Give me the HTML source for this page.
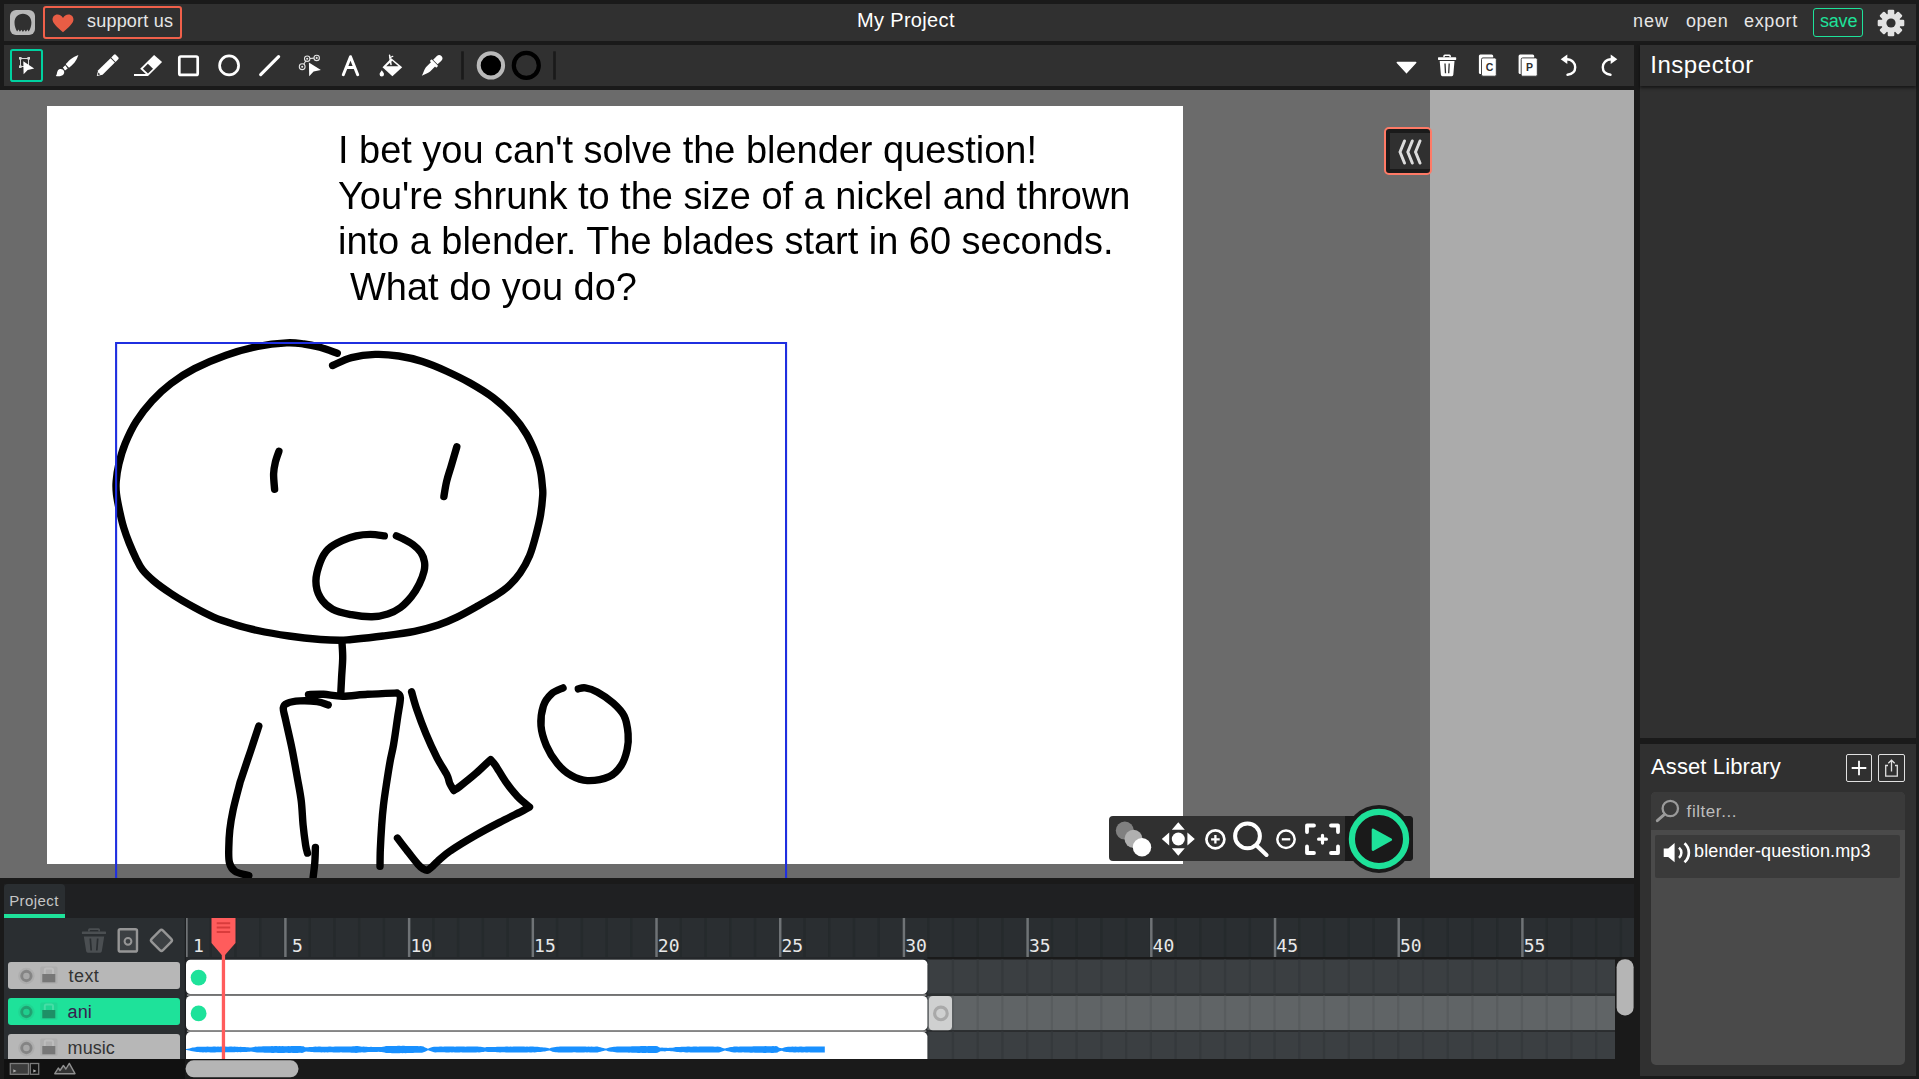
<!DOCTYPE html>
<html lang="en">
<head>
<meta charset="utf-8">
<title>Wick Editor</title>
<style>
*{box-sizing:border-box;margin:0;padding:0}
html,body{width:1919px;height:1079px;overflow:hidden;background:#1a1a1a}
body{position:relative;font-family:"Liberation Sans",sans-serif;color:#fff}
.abs{position:absolute}
.t{position:absolute;white-space:nowrap;line-height:1}
#menubar{left:4px;top:4px;width:1912px;height:37px;background:#303030}
#toolbar{left:4px;top:45px;width:1630px;height:41px;background:#303030}
#canvasarea{left:0;top:90px;width:1634px;height:788px;background:#6b6b6b;overflow:hidden}
#lightgray{left:1430px;top:0;width:204px;height:788px;background:#ababab}
#stage{left:47px;top:15.5px;width:1136px;height:758.5px;background:#fff}
#inspector{left:1640px;top:45px;width:276px;height:693px;background:#303030}
#inspectorhead{left:0;top:0;width:276px;height:41px;background:#303030;box-shadow:0 2px 3px rgba(0,0,0,.55)}
#assets{left:1640px;top:744px;width:276px;height:332px;background:#303030}
#timeline{left:4px;top:884px;width:1630px;height:195px;background:#1a1a1a}
#ctext{left:338.4px;top:38px;will-change:transform;font-size:37.95px;line-height:45.7px;color:#000;white-space:nowrap}
.lyr{left:4.300px;width:171.300px;height:27px;border-radius:3px}
.num{top:53px;font-size:18px;color:#e8e8e8;font-family:'DejaVu Sans Mono',monospace}
</style>
</head>
<body>
<div id="menubar" class="abs">
  <div class="abs" style="left:6px;top:6px;width:25px;height:25px;border-radius:6px;background:#b9b9b9"></div>
  <svg class="abs" style="left:6px;top:6px" width="25" height="25" viewBox="10 10 25 25"><path d="M22.9 13.8c5 0 8.5 3.9 8.5 8.8 0 3.5-1 6.4-2.7 8.9l-1.3-1.9-1.5 2.2-1.5-2-1.5 2.2-1.5-2.2-1.5 2-1.4-2.2-1.4 1.8c-1.6-2.4-2.6-5.3-2.6-8.8 0-4.9 3.4-8.8 8.4-8.8z" fill="#303030"/></svg>
  <div class="abs" style="left:39px;top:2px;width:139px;height:33px;border:2px solid #f0604a;border-radius:3px"></div>
  <svg class="abs" style="left:47.5px;top:9.6px" width="22" height="19" viewBox="0 0 22 19"><path d="M11 18.2C8.5 16 1.2 10.6 0.6 6.3 0.1 2.6 2.6 0.4 5.5 0.4c2.4 0 4.300 1.300 5.500 3.600C12.200 1.700 14.100 0.400 16.500 0.400c2.900 0 5.400 2.200 4.900 5.900C20.800 10.600 13.500 16 11 18.200z" fill="#e85d45"/></svg>
  <div class="t" id="t_support" style="left:83.0px;top:7.9px;font-size:18px;color:#e6e6e6;letter-spacing:0.21px">support us</div>
  <div class="t" id="t_title" style="left:853.0px;top:6.0px;font-size:20px;color:#fff;letter-spacing:0.33px">My Project</div>
  <div class="t" id="t_new" style="left:1629.0px;top:7.9px;font-size:18px;color:#e6e6e6;letter-spacing:1.00px">new</div>
  <div class="t" id="t_open" style="left:1682.0px;top:7.9px;font-size:18px;color:#e6e6e6;letter-spacing:0.54px">open</div>
  <div class="t" id="t_export" style="left:1740.0px;top:7.9px;font-size:18px;color:#e6e6e6;letter-spacing:0.64px">export</div>
  <div class="abs" style="left:1809px;top:4px;width:50px;height:29px;border:1px solid #1ee29a;border-radius:3px"></div>
  <div class="t" id="t_save" style="left:1816.0px;top:7.9px;font-size:18px;color:#1ee29a;letter-spacing:-0.21px">save</div>
  <svg class="abs" style="left:1873px;top:5px" width="28" height="28" viewBox="-14 -14 28 28"><g fill="#e2e2e2"><circle r="9.6"/><g id="teeth"><rect x="-3.3" y="-13.3" width="6.600" height="6" rx="1.2"/><rect x="-3.3" y="7.300" width="6.600" height="6" rx="1.2"/></g><use href="#teeth" transform="rotate(45)"/><use href="#teeth" transform="rotate(90)"/><use href="#teeth" transform="rotate(135)"/></g><circle r="4.6" fill="#303030"/></svg>
</div>
<div id="toolbar" class="abs">
<svg class="abs" style="left:0;top:0" width="1630" height="41" viewBox="4 45 1630 41">
  <rect x="11" y="50" width="31" height="31" rx="1.800" fill="none" stroke="#00d1a0" stroke-width="2"/>
  <!-- cursor -->
  <g fill="none" stroke="#d8d8d8" stroke-width="1"><rect x="20.5" y="58.5" width="8" height="8"/></g>
  <g fill="#d8d8d8"><rect x="19" y="57" width="2.600" height="2.600"/><rect x="27.400" y="57" width="2.600" height="2.600"/><rect x="19" y="65.400" width="2.600" height="2.600"/></g>
  <path d="M23.300 61.200L34.200 68.400L27.700 70L23.600 74.300Z" fill="#fff"/>
  <!-- brush -->
  <g fill="#fff">
    <path d="M55.800 76C57 75 56.800 72.600 57.600 70.900C58.500 69.100 61 68.600 62.700 69.600C64.400 70.700 64.700 72.700 63.600 74.200C62 76.300 58.500 76.400 55.800 76Z"/>
    <path d="M62.900 67.400L65.300 65.300L67.700 68.400L65 70.500Z"/>
    <path d="M65.800 64.400C67.500 61.500 72 57.300 78.400 54.900C76.700 60.500 73 64.700 69 67.700Z"/>
  </g>
  <!-- pencil -->
  <g transform="translate(96.800,76) rotate(-44.500)" fill="#fff">
    <path d="M0 0L5-3.100H22.300V3.100H5Z"/>
    <path d="M23.300-3.100H27A1.500 1.500 0 0 1 28.500-1.600V1.600A1.500 1.500 0 0 1 27 3.100H23.300Z"/>
    <path d="M1.300 0L3.600-1.300V1.300Z" fill="#303030"/>
  </g>
  <!-- eraser -->
  <path d="M154.100 55L162.100 62L148 76L140.200 68.700Z" fill="#fff"/>
  <path d="M147.900 63.800L153 68.700L148 73.600L142.900 68.700Z" fill="#303030"/>
  <rect x="134" y="74" width="14" height="2" fill="#fff"/>
  <!-- rect, ellipse, line -->
  <rect x="179.300" y="56.500" width="18.400" height="18.400" rx="1.500" fill="none" stroke="#fff" stroke-width="2.700"/>
  <circle cx="229.100" cy="65.400" r="9.500" fill="none" stroke="#fff" stroke-width="2.700"/>
  <path d="M260.700 74.600L278.600 56.700" stroke="#fff" stroke-width="3.200" stroke-linecap="round"/>
  <!-- path cursor -->
  <g fill="none" stroke="#e4e4e4" stroke-width="1.100"><circle cx="302.200" cy="66.700" r="2.900"/><circle cx="307.200" cy="58.700" r="2.700"/><circle cx="316.700" cy="57.900" r="2.700"/><circle cx="302.200" cy="66.700" r="0.500"/><circle cx="307.200" cy="58.700" r="0.500"/><circle cx="316.700" cy="57.900" r="0.500"/><path d="M303.700 64.200L305.800 61M309.900 58.500L314 58.100"/></g>
  <path d="M308.900 62.400L320.900 70.100L313.600 71.600L309.200 76.300Z" fill="#fff"/>
  <!-- text A -->
  <path d="M343.300 74.700L350.500 56.700L357.700 74.700M346.200 67.600H354.800" fill="none" stroke="#fff" stroke-width="3" stroke-linecap="round" stroke-linejoin="round"/>
  <!-- bucket -->
  <path d="M382.500 67.200L391.300 58.300L402.200 67.200L392.400 76.200Z" fill="#fff"/>
  <path d="M386.200 66.300L392.200 60.700L398.500 66.300Z" fill="#303030"/>
  <path d="M389.600 55.300L391 64.500" stroke="#fff" stroke-width="1.500" stroke-linecap="round"/>
  <path d="M389.800 57.800L392.800 56.300" stroke="#fff" stroke-width="1.200" stroke-linecap="round"/>
  <path d="M381.800 70.200C383 72 384 73 384 74.200A2.200 2.200 0 0 1 379.600 74.200C379.600 73 380.600 72 381.800 70.200Z" fill="#fff"/>
  <!-- eyedropper -->
  <g transform="translate(421.600,75.600) rotate(-44.500)" fill="#fff">
    <path d="M0 0.300C3-0.600 6-2.600 9-3H17V3H9C6 2.700 3 1.200 0 0.300Z"/>
    <rect x="16" y="-4.700" width="2.600" height="9.400" rx="0.800"/>
    <path d="M19.300-3.200H24.600A3.200 3.200 0 0 1 24.600 3.200H19.300Z"/>
  </g>
  <!-- separators & swatches -->
  <rect x="461.200" y="51.300" width="2.600" height="28.300" fill="#1a1a1a"/>
  <rect x="553.200" y="51.300" width="2.600" height="28.300" fill="#1a1a1a"/>
  <circle cx="490.900" cy="65.400" r="12.200" fill="#000" stroke="#b9b9b9" stroke-width="4"/>
  <circle cx="526.300" cy="65.400" r="12.500" fill="none" stroke="#000" stroke-width="4.200"/>
  <!-- right icons -->
  <path d="M1397.300 62.600H1415.700L1406.500 72.600Z" fill="#fff" stroke="#fff" stroke-width="1.500" stroke-linejoin="round"/>
  <g fill="#fff"><!-- trash -->
    <path d="M1443.300 57.200V56A1.500 1.500 0 0 1 1444.800 54.500H1449.400A1.500 1.500 0 0 1 1450.900 56V57.200H1449.400V56H1444.800V57.200Z"/>
    <rect x="1438" y="57.300" width="18.200" height="2.600" rx="0.600"/>
    <path d="M1439.700 61H1454.500L1453.300 74.800A1.500 1.500 0 0 1 1451.800 76.200H1442.400A1.500 1.500 0 0 1 1440.900 74.800Z"/>
  </g>
  <path d="M1445 63.500L1445.500 73.300M1449.200 63.500L1448.700 73.300" stroke="#303030" stroke-width="1.300"/>
  <!-- copy -->
  <rect x="1478.900" y="54.600" width="14.300" height="19.300" rx="1.500" fill="#fff"/><rect x="1481.500" y="57.900" width="14.800" height="18.300" rx="1.500" fill="#fff" stroke="#303030" stroke-width="0.900"/>
  <!-- paste -->
  <rect x="1518.600" y="54.600" width="15.600" height="19.300" rx="1.500" fill="#fff"/><rect x="1521.200" y="57.900" width="16.100" height="18.300" rx="1.500" fill="#fff" stroke="#303030" stroke-width="0.900"/>
  <!-- undo / redo -->
  <path d="M1566.500 59.300C1572.500 59.300 1575.200 63.500 1575.200 67.300C1575.200 71.500 1572 74.200 1567.500 74.800" fill="none" stroke="#fff" stroke-width="2.400" stroke-linecap="round"/>
  <path d="M1560.700 59.300L1567.300 54.600V64Z" fill="#fff"/>
  <path d="M1611.500 59.300C1605.500 59.300 1602.800 63.500 1602.800 67.300C1602.800 71.500 1606 74.200 1610.500 74.800" fill="none" stroke="#fff" stroke-width="2.400" stroke-linecap="round"/>
  <path d="M1617.300 59.300L1610.700 54.600V64Z" fill="#fff"/>
</svg>
<div class="t" style="left:1481.700px;top:16.800px;font-size:10.500px;font-weight:bold;color:#303030">C</div>
<div class="t" style="left:1522.100px;top:16.800px;font-size:10.500px;font-weight:bold;color:#303030">P</div>
</div>
<div id="canvasarea" class="abs">
  <div id="lightgray" class="abs"></div>
  <div id="stage" class="abs"></div>
  <div id="ctext" class="abs">I bet you can't solve the blender question!<br>You're shrunk to the size of a nickel and thrown<br>into a blender. The blades start in 60 seconds.<br><span style="margin-left:1.5px">&nbsp;What do you do?</span></div>
  <svg id="drawing" class="abs" style="left:0;top:0" width="1634" height="788" viewBox="0 90 1634 788">
    <g fill="none" stroke="#000" stroke-width="7.4" stroke-linecap="round" stroke-linejoin="round">
<path d="M337.3 353.3C334.4 352.3 325.6 348.9 320.0 347.3C314.4 345.8 309.6 344.7 304.0 344.0C298.4 343.3 294.4 342.5 286.7 342.9C279.0 343.3 267.7 344.4 257.6 346.5C247.5 348.6 236.5 351.5 226.0 355.2C215.5 358.9 203.7 363.9 194.5 368.6C185.3 373.3 178.0 378.2 170.9 383.6C163.8 389.0 157.8 394.6 152.0 400.9C146.2 407.2 140.7 414.3 136.2 421.4C131.7 428.5 128.1 436.4 125.2 443.5C122.3 450.6 120.4 457.6 118.9 463.9C117.4 470.2 116.6 476.2 116.2 481.3C115.8 486.4 115.9 489.2 116.5 494.2C117.1 499.2 118.5 506.0 119.7 511.5C120.9 517.0 122.0 522.0 123.6 527.3C125.2 532.5 127.1 537.8 129.2 543.0C131.3 548.2 134.0 554.3 136.2 558.8C138.4 563.3 139.6 566.1 142.5 569.8C145.4 573.5 148.9 576.9 153.6 580.9C158.3 584.9 164.1 589.0 170.9 593.5C177.7 598.0 187.4 603.7 194.5 607.6C201.6 611.5 206.9 614.3 213.5 617.1C220.1 619.9 226.6 622.0 233.9 624.2C241.2 626.4 248.4 628.5 257.6 630.5C266.8 632.5 278.6 634.5 289.1 636.0C299.6 637.5 312.1 638.8 320.6 639.5C329.1 640.2 334.9 640.3 340.0 640.3C345.1 640.3 344.3 640.2 351.5 639.5C358.7 638.8 372.5 637.4 383.0 636.0C393.5 634.6 405.3 633.1 414.5 631.3C423.7 629.5 431.1 627.4 438.2 625.0C445.3 622.6 450.5 620.3 457.1 617.1C463.7 613.9 471.0 609.7 477.6 606.0C484.2 602.3 491.2 598.4 496.5 595.0C501.8 591.6 505.2 589.3 509.1 585.6C513.0 581.9 516.7 578.0 520.1 573.0C523.5 568.0 527.0 561.9 529.6 555.6C532.2 549.3 534.1 542.0 535.9 535.2C537.7 528.4 539.5 521.3 540.6 514.7C541.7 508.1 542.4 500.3 542.7 495.8C543.0 491.3 542.9 491.6 542.5 487.6C542.1 483.6 541.7 477.3 540.6 471.8C539.5 466.3 538.3 460.8 535.9 454.5C533.5 448.2 530.3 440.6 526.4 434.0C522.5 427.4 517.7 421.1 512.2 415.1C506.7 409.1 500.4 403.2 493.3 397.8C486.2 392.4 477.6 387.3 469.7 382.8C461.8 378.3 454.0 374.6 446.1 371.0C438.2 367.4 430.3 364.0 422.4 361.5C414.5 359.0 406.7 357.2 398.8 356.0C390.9 354.8 383.1 354.1 375.2 354.4C367.3 354.7 358.6 355.8 351.5 357.6C344.4 359.5 335.8 364.2 332.6 365.5"/>
<path d="M278.9 451.3C278.3 453.1 276.3 458.2 275.4 462.0C274.5 465.8 273.7 469.5 273.6 474.0C273.5 478.5 274.4 486.7 274.6 489.2"/>
<path d="M456.8 446.9C455.9 450.1 452.9 460.2 451.2 466.0C449.5 471.8 447.8 476.4 446.6 481.5C445.4 486.6 444.3 494.0 443.9 496.5"/>
<path d="M384.3 535.9C382.0 535.6 375.1 534.4 370.4 534.4C365.7 534.4 360.9 534.8 356.2 535.9C351.5 537.0 346.8 538.5 342.1 540.7C337.4 542.9 331.5 545.8 327.9 549.3C324.3 552.8 322.3 556.7 320.3 562.0C318.3 567.3 315.9 575.0 315.9 580.9C315.9 586.8 317.5 592.8 320.3 597.5C323.1 602.2 327.4 606.3 332.6 609.2C337.8 612.1 344.9 613.4 351.5 614.7C358.1 616.0 365.9 616.9 372.0 616.8C378.1 616.7 383.1 615.5 387.8 614.0C392.5 612.5 396.5 610.5 400.4 607.6C404.3 604.7 408.2 600.5 411.4 596.6C414.5 592.7 417.2 588.2 419.3 584.0C421.4 579.8 423.1 575.1 424.0 571.4C424.9 567.7 425.0 565.1 424.5 562.0C424.0 558.9 422.8 555.4 420.9 552.5C419.0 549.6 415.9 546.8 413.0 544.6C410.1 542.4 406.3 540.6 403.5 539.1C400.7 537.6 397.6 536.4 396.4 535.9"/>
<path d="M342.0 642.6C342.1 645.2 342.8 652.6 342.7 658.4C342.6 664.2 341.9 671.5 341.6 677.3C341.3 683.1 340.9 690.4 340.8 693.0"/>
<path d="M308.5 694.6C311.0 694.5 317.9 694.0 323.5 694.3C329.1 694.6 335.0 696.2 342.4 696.2C349.8 696.2 358.5 694.8 367.6 694.3C376.7 693.8 392.1 693.2 397.0 693.0C397.6 693.8 400.3 693.6 400.4 697.8C400.5 702.0 398.6 710.3 397.5 718.2C396.4 726.1 394.8 737.7 393.5 745.0C392.2 752.3 391.2 755.3 390.0 762.0C388.8 768.7 387.4 777.8 386.3 785.0C385.2 792.2 384.3 798.3 383.5 805.0C382.7 811.7 382.2 817.5 381.7 825.0C381.2 832.5 380.6 843.1 380.3 850.0C380.0 856.9 380.1 863.6 380.0 866.3"/>
<path d="M328.2 704.9C326.4 704.4 321.9 702.4 317.2 701.7C312.5 701.0 304.8 700.6 299.8 700.9C294.8 701.2 289.9 702.1 287.2 703.3C284.4 704.5 283.6 705.2 283.3 708.0C283.0 710.8 284.2 713.1 285.6 719.8C287.0 726.5 289.9 738.4 291.9 748.2C293.9 758.0 295.9 769.9 297.5 778.8C299.1 787.6 300.4 793.6 301.3 801.3C302.2 809.0 302.4 817.7 303.1 825.0C303.8 832.3 304.9 840.3 305.6 845.0C306.3 849.7 307.2 851.8 307.5 853.1"/>
<path d="M315.4 847.5C315.3 850.0 315.2 857.5 314.8 862.5C314.4 867.5 313.4 875.0 313.1 877.5"/>
<path d="M258.8 726.1C257.5 730.0 253.9 741.1 251.0 749.8C248.1 758.5 243.4 772.2 241.5 778.1C239.6 784.0 240.8 779.7 239.4 785.0C238.0 790.3 234.7 802.5 233.1 810.0C231.5 817.5 230.5 823.8 229.8 830.0C229.1 836.2 228.9 842.1 228.8 847.5C228.7 852.9 228.4 858.5 229.4 862.5C230.4 866.5 231.8 869.1 235.0 871.3C238.2 873.5 246.5 874.9 248.8 875.6"/>
<path d="M411.6 691.9C412.5 694.9 414.5 702.8 416.9 709.8C419.3 716.8 422.6 725.7 425.9 733.7C429.2 741.7 433.4 750.8 436.9 757.6C440.4 764.4 444.6 770.3 446.8 774.6C449.0 778.9 448.6 780.9 449.8 783.5C451.0 786.1 453.1 789.3 453.8 790.5C454.8 789.8 456.2 789.3 459.8 786.5C463.4 783.7 470.6 778.1 475.7 773.6C480.8 769.1 488.1 761.9 490.6 759.6C491.4 760.6 493.1 761.9 495.6 765.6C498.1 769.3 502.0 776.5 505.6 781.6C509.2 786.8 513.5 792.3 517.5 796.5C521.5 800.7 527.5 805.2 529.5 807.0C528.5 807.6 528.5 807.8 523.5 810.4C518.5 813.0 507.6 818.2 499.6 822.4C491.6 826.5 484.0 830.5 475.7 835.3C467.4 840.1 456.1 847.0 449.8 851.3C443.5 855.6 440.9 858.6 437.8 861.2C434.8 863.9 433.3 865.7 431.5 867.2C429.7 868.7 428.6 870.0 427.2 870.3C425.8 870.6 424.8 869.8 423.2 868.8C421.6 867.8 420.8 867.5 417.9 864.2C415.0 861.0 409.4 853.6 406.0 849.3C402.6 844.9 398.9 840.0 397.5 838.1"/>
<path d="M563.0 687.9C561.1 688.9 554.7 690.9 551.4 693.9C548.1 696.9 545.1 700.6 543.4 705.9C541.7 711.2 540.5 719.2 541.0 725.8C541.5 732.4 543.7 739.4 546.4 745.7C549.1 752.0 553.2 758.6 557.4 763.6C561.5 768.6 566.3 772.8 571.3 775.6C576.3 778.4 581.0 780.4 587.3 780.6C593.6 780.8 603.6 779.1 609.2 776.6C614.8 774.1 618.1 770.1 621.1 765.6C624.1 761.1 625.9 755.0 627.1 749.7C628.3 744.4 628.6 739.4 628.1 733.7C627.6 728.1 626.6 720.9 624.1 715.8C621.6 710.7 617.6 706.9 613.1 702.9C608.6 698.9 601.8 694.4 597.2 691.9C592.6 689.4 588.4 688.4 585.3 687.9C582.1 687.4 579.5 688.7 578.3 688.9"/>
    </g>
    <path d="M116.1 878V343H786.05V878" fill="none" stroke="#1f2fe0" stroke-width="2.1"/>
  </svg>
  <div class="abs" style="left:1384px;top:37px;width:48px;height:48px;border:2px solid #ff7a66;border-radius:5px;background:#1a1a1a;overflow:hidden"><div class="abs" style="left:4px;top:4px;width:44px;height:36px;background:#303030"></div>
    <svg class="abs" style="left:0;top:0" width="44" height="44" viewBox="1386 129 44 44"><path d="M1404.500 141L1400 152L1404.500 163M1412.300 141L1407.800 152L1412.300 163M1420 141L1415.500 152L1420 163" fill="none" stroke="#dcdcdc" stroke-width="3" stroke-linecap="round" stroke-linejoin="round"/></svg></div>
  <div class="abs" style="left:1109px;top:726px;width:304px;height:45px;background:#303030;border-radius:4px;overflow:hidden"><div class="abs" style="left:236px;top:0;width:68px;height:45px;background:#1a1a1a"></div></div>
  <svg class="abs" style="left:1100px;top:710px" width="330" height="78" viewBox="1100 800 330 78">
    <circle cx="1379" cy="838.900" r="34" fill="#1a1a1a"/>
    <circle cx="1379" cy="839" r="27.100" fill="none" stroke="#1ee29a" stroke-width="6.200"/>
    <path d="M1373 829.800L1390.800 839.600L1373 849.700Z" fill="#1ee29a" stroke="#1ee29a" stroke-width="2.600" stroke-linejoin="round"/>
    <!-- onion -->
    <circle cx="1124.800" cy="830.600" r="9" fill="#808080"/><circle cx="1133.500" cy="838.800" r="9" fill="#b0b0b0"/><circle cx="1142" cy="847.300" r="9.200" fill="#fff"/>
    <!-- pan -->
    <g fill="#fff"><circle cx="1178.300" cy="839" r="6.500"/><path d="M1171.800 829.700H1184.800L1178.300 822.300ZM1171.800 848.300H1184.800L1178.300 855.700ZM1169.200 832.500V845.500L1161.800 839ZM1187.400 832.500V845.500L1194.800 839Z"/></g>
    <!-- zoom in -->
    <circle cx="1215.400" cy="839.300" r="9" fill="none" stroke="#fff" stroke-width="2.700"/><path d="M1215.400 835V843.600M1211.100 839.300H1219.700" stroke="#fff" stroke-width="2.300"/>
    <!-- magnifier -->
    <circle cx="1247.500" cy="835.900" r="12.400" fill="none" stroke="#fff" stroke-width="4"/><path d="M1256.500 845.500L1266.500 855" stroke="#fff" stroke-width="4" stroke-linecap="round"/>
    <!-- zoom out -->
    <circle cx="1286" cy="839.300" r="8.700" fill="none" stroke="#fff" stroke-width="2.500"/><path d="M1281.800 839.300H1290.200" stroke="#fff" stroke-width="2.300"/>
    <!-- recenter -->
    <path d="M1307 832V825.500H1314M1331 825.500H1338V832M1338 846.500V853H1331M1314 853H1307V846.500" fill="none" stroke="#fff" stroke-width="3.800" stroke-linecap="round" stroke-linejoin="round"/><path d="M1322.500 835.300V843.100M1318.600 839.200H1326.400" stroke="#fff" stroke-width="3.200" stroke-linecap="round"/>
  </svg>
</div>
<div id="inspector" class="abs"><div id="inspectorhead" class="abs"></div>
<div class="t" id="t_inspector" style="left:10.2px;top:7.5px;font-size:24px;color:#fff;letter-spacing:0.55px">Inspector</div></div>
<div id="assets" class="abs">
<div class="t" id="t_assetlib" style="left:11.0px;top:11.6px;font-size:22px;color:#fff;letter-spacing:0.11px">Asset Library</div>
<div class="abs" style="left:206px;top:10px;width:26px;height:28px;border:1px solid #e0e0e0;border-radius:2px"></div>
<div class="abs" style="left:238px;top:10px;width:27px;height:28px;border:1px solid #e0e0e0;border-radius:2px"></div>
<svg class="abs" style="left:206px;top:10px" width="60" height="28" viewBox="1846 754 60 28">
  <path d="M1859 760.700V775.300M1851.700 768H1866.300" stroke="#fff" stroke-width="1.800"/>
  <path d="M1888 765.500H1885.700V776.200H1897.300V765.500H1895" fill="none" stroke="#e0e0e0" stroke-width="1.300"/>
  <path d="M1891.500 771.500V760.500M1888.300 763.300L1891.500 760.200L1894.700 763.300" fill="none" stroke="#e0e0e0" stroke-width="1.300"/>
</svg>
<div class="abs" style="left:11px;top:48px;width:254px;height:273px;background:#4a4a4a;border-radius:5px;overflow:hidden">
  <div class="abs" style="left:0;top:0;width:254px;height:38px;background:#3a3a3a"></div>
  <svg class="abs" style="left:4px;top:7px" width="26" height="24" viewBox="1655 799 26 24"><circle cx="1670.300" cy="808.500" r="7.700" fill="none" stroke="#9a9a9a" stroke-width="2.300"/><path d="M1664.500 814.300L1657.300 820.700" stroke="#9a9a9a" stroke-width="2.900" stroke-linecap="round"/></svg>
  <div class="t" id="t_filter" style="left:35.6px;top:10.8px;font-size:17px;color:#bdbdbd;letter-spacing:0.56px">filter...</div>
  <div class="abs" style="left:4px;top:43px;width:245px;height:42.500px;background:#3a3a3a;border-radius:2px"></div>
  <svg class="abs" style="left:10px;top:48px" width="32" height="26" viewBox="1661 840 32 26"><path d="M1663.700 848.500H1668.200L1674.600 843V862.300L1668.200 857H1663.700Z" fill="#fff"/><path d="M1679 847.600C1682.200 850.400 1682.200 855 1679 857.900" fill="none" stroke="#fff" stroke-width="2.500"/><path d="M1684.500 843.300C1690.300 848.300 1690.300 857.200 1684.500 862.200" fill="none" stroke="#fff" stroke-width="2.700"/></svg>
  <div class="t" id="t_asset" style="left:43.0px;top:49.6px;font-size:18px;color:#fff;letter-spacing:0.12px">blender-question.mp3</div>
</div>
</div>
<div id="timeline" class="abs">
<div class="abs" style="left:0;top:0;width:1630px;height:34px;background:#1f2022"></div>
<div class="abs" style="left:0;top:0;width:61px;height:30px;background:#2a2e31;border-radius:4px 4px 0 0"></div>
<div class="abs" style="left:0;top:30px;width:61px;height:4px;background:#1ee29a"></div>
<div class="abs" style="left:0;top:34px;width:1630px;height:141px;background:#2a2e31"></div>
<div class="abs" style="left:0;top:175px;width:181px;height:20px;background:#111"></div><div class="abs" style="left:181px;top:175px;width:1449px;height:20px;background:#1a1a1a"></div>
<div class="abs lyr" style="top:78px;background:#b7b7b7"></div>
<div class="abs lyr" style="top:114px;background:#1ee29a"></div>
<div class="abs lyr" style="top:150px;height:25px;background:#b7b7b7;border-radius:3px 3px 0 0"></div>
<svg class="abs" style="left:0;top:0" width="1630" height="195" viewBox="4 884 1630 195">
<path d="M210.74 918V957M235.48 918V957M260.22 918V957M284.96 918V957M309.70 918V957M334.44 918V957M359.18 918V957M383.92 918V957M408.66 918V957M433.40 918V957M458.14 918V957M482.88 918V957M507.62 918V957M532.36 918V957M557.10 918V957M581.84 918V957M606.58 918V957M631.32 918V957M656.06 918V957M680.80 918V957M705.54 918V957M730.28 918V957M755.02 918V957M779.76 918V957M804.50 918V957M829.24 918V957M853.98 918V957M878.72 918V957M903.46 918V957M928.20 918V957M952.94 918V957M977.68 918V957M1002.42 918V957M1027.16 918V957M1051.90 918V957M1076.64 918V957M1101.38 918V957M1126.12 918V957M1150.86 918V957M1175.60 918V957M1200.34 918V957M1225.08 918V957M1249.82 918V957M1274.56 918V957M1299.30 918V957M1324.04 918V957M1348.78 918V957M1373.52 918V957M1398.26 918V957M1423.00 918V957M1447.74 918V957M1472.48 918V957M1497.22 918V957M1521.96 918V957M1546.70 918V957M1571.44 918V957M1596.18 918V957M1620.92 918V957" stroke="#252a2c" stroke-width="2.400"/>
<path d="M186.45 918V957M285.41 918V957M409.11 918V957M532.81 918V957M656.51 918V957M780.21 918V957M903.91 918V957M1027.61 918V957M1151.31 918V957M1275.01 918V957M1398.71 918V957M1522.41 918V957" stroke="#6f7376" stroke-width="2.5"/>
<rect x="186" y="957" width="1448" height="102" fill="#1a1a1a"/>
<rect x="186" y="959.500" width="1429" height="34.300" fill="#3b3f42"/>
<rect x="186" y="995.700" width="1429" height="34.300" fill="#606466"/>
<rect x="186" y="1031.500" width="1429" height="27.500" fill="#3b3f42"/>
<rect x="186" y="993.800" width="1429" height="1.900" fill="#2c2f31"/><rect x="186" y="1030" width="1429" height="1.500" fill="#2c2f31"/>
<path d="M928.20 959.5V993.8M928.20 1031.5V1059M952.94 959.5V993.8M952.94 1031.5V1059M977.68 959.5V993.8M977.68 1031.5V1059M1002.42 959.5V993.8M1002.42 1031.5V1059M1027.16 959.5V993.8M1027.16 1031.5V1059M1051.90 959.5V993.8M1051.90 1031.5V1059M1076.64 959.5V993.8M1076.64 1031.5V1059M1101.38 959.5V993.8M1101.38 1031.5V1059M1126.12 959.5V993.8M1126.12 1031.5V1059M1150.86 959.5V993.8M1150.86 1031.5V1059M1175.60 959.5V993.8M1175.60 1031.5V1059M1200.34 959.5V993.8M1200.34 1031.5V1059M1225.08 959.5V993.8M1225.08 1031.5V1059M1249.82 959.5V993.8M1249.82 1031.5V1059M1274.56 959.5V993.8M1274.56 1031.5V1059M1299.30 959.5V993.8M1299.30 1031.5V1059M1324.04 959.5V993.8M1324.04 1031.5V1059M1348.78 959.5V993.8M1348.78 1031.5V1059M1373.52 959.5V993.8M1373.52 1031.5V1059M1398.26 959.5V993.8M1398.26 1031.5V1059M1423.00 959.5V993.8M1423.00 1031.5V1059M1447.74 959.5V993.8M1447.74 1031.5V1059M1472.48 959.5V993.8M1472.48 1031.5V1059M1497.22 959.5V993.8M1497.22 1031.5V1059M1521.96 959.5V993.8M1521.96 1031.5V1059M1546.70 959.5V993.8M1546.70 1031.5V1059M1571.44 959.5V993.8M1571.44 1031.5V1059M1596.18 959.5V993.8M1596.18 1031.5V1059" stroke="#35393c" stroke-width="2.200"/>
<path d="M952.94 995.7V1030M977.68 995.7V1030M1002.42 995.7V1030M1027.16 995.7V1030M1051.90 995.7V1030M1076.64 995.7V1030M1101.38 995.7V1030M1126.12 995.7V1030M1150.86 995.7V1030M1175.60 995.7V1030M1200.34 995.7V1030M1225.08 995.7V1030M1249.82 995.7V1030M1274.56 995.7V1030M1299.30 995.7V1030M1324.04 995.7V1030M1348.78 995.7V1030M1373.52 995.7V1030M1398.26 995.7V1030M1423.00 995.7V1030M1447.74 995.7V1030M1472.48 995.7V1030M1497.22 995.7V1030M1521.96 995.7V1030M1546.70 995.7V1030M1571.44 995.7V1030M1596.18 995.7V1030" stroke="#585c5e" stroke-width="2.200"/>
<rect x="186" y="957" width="741.4" height="102" fill="#25282b"/><rect x="187" y="994.200" width="739.4" height="1.700" fill="#858585"/><rect x="187" y="1030.300" width="739.4" height="1.700" fill="#858585"/>
<rect x="186" y="959.800" width="741.4" height="34.200" rx="4.500" fill="#fff"/>
<rect x="186" y="996" width="741.4" height="34.200" rx="4.500" fill="#fff"/>
<path d="M186 1059V1036.600A4.500 4.500 0 0 1 190.500 1032.100H922.9A4.500 4.500 0 0 1 927.4 1036.600V1059Z" fill="#fff"/>
<rect x="928.900" y="995.900" width="23.100" height="34.400" rx="4" fill="#cfd0d0"/>
<circle cx="940.900" cy="1013.400" r="6.300" fill="none" stroke="#a9a9a9" stroke-width="3.100"/>
<circle cx="198.600" cy="977.600" r="7.900" fill="#1ee29a"/><circle cx="198.600" cy="1013.400" r="7.900" fill="#1ee29a"/>
<path d="M185.0 1049.2L186.5 1049.0L188.0 1048.8L189.5 1048.4L191.0 1048.0L192.5 1047.6L194.0 1047.6L195.5 1047.2L197.0 1046.8L198.5 1046.7L200.0 1046.7L201.5 1046.8L203.0 1046.7L204.5 1046.8L206.0 1046.7L207.5 1046.6L209.0 1046.8L210.5 1046.7L212.0 1046.7L213.5 1046.5L215.0 1046.5L216.5 1046.7L218.0 1046.5L219.5 1046.7L221.0 1046.6L222.5 1046.7L224.0 1046.8L225.5 1046.6L227.0 1046.7L228.5 1046.7L230.0 1046.6L231.5 1046.6L233.0 1046.8L234.5 1046.6L236.0 1046.7L237.5 1046.8L239.0 1046.9L240.5 1046.8L242.0 1046.9L243.5 1046.9L245.0 1046.9L246.5 1047.2L248.0 1047.3L249.5 1047.4L251.0 1047.6L252.5 1047.3L254.0 1047.0L255.5 1046.6L257.0 1046.7L258.5 1046.5L260.0 1046.5L261.5 1046.5L263.0 1046.3L264.5 1046.3L266.0 1046.3L267.5 1046.3L269.0 1046.2L270.5 1046.3L272.0 1046.0L273.5 1046.3L275.0 1046.1L276.5 1046.1L278.0 1046.3L279.5 1046.1L281.0 1046.2L282.5 1046.1L284.0 1046.2L285.5 1046.2L287.0 1046.2L288.5 1046.0L290.0 1046.2L291.5 1046.0L293.0 1046.0L294.5 1046.0L296.0 1046.1L297.5 1046.1L299.0 1046.1L300.5 1046.0L302.0 1046.2L303.5 1046.3L305.0 1047.3L306.5 1047.2L308.0 1047.3L309.5 1046.9L311.0 1047.0L312.5 1046.9L314.0 1046.7L315.5 1046.6L317.0 1046.7L318.5 1046.6L320.0 1046.6L321.5 1046.7L323.0 1046.7L324.5 1046.7L326.0 1046.7L327.5 1046.7L329.0 1046.6L330.5 1046.5L332.0 1046.7L333.5 1046.7L335.0 1046.5L336.5 1046.6L338.0 1046.6L339.5 1046.6L341.0 1046.5L342.5 1046.5L344.0 1046.5L345.5 1046.5L347.0 1046.6L348.5 1046.4L350.0 1046.6L351.5 1046.4L353.0 1046.2L354.5 1046.3L356.0 1046.0L357.5 1046.1L359.0 1046.3L360.5 1046.4L362.0 1046.7L363.5 1046.6L365.0 1046.8L366.5 1046.7L368.0 1046.9L369.5 1046.9L371.0 1046.8L372.5 1046.9L374.0 1046.9L375.5 1047.1L377.0 1047.1L378.5 1047.0L380.0 1047.1L381.5 1047.0L383.0 1046.7L384.5 1046.5L386.0 1046.1L387.5 1045.9L389.0 1045.9L390.5 1045.9L392.0 1045.9L393.5 1045.9L395.0 1045.9L396.5 1045.9L398.0 1045.7L399.5 1045.7L401.0 1045.9L402.5 1045.8L404.0 1045.8L405.5 1045.9L407.0 1045.9L408.5 1045.9L410.0 1046.0L411.5 1046.0L413.0 1046.1L414.5 1046.1L416.0 1046.0L417.5 1046.1L419.0 1046.2L420.5 1046.1L422.0 1046.2L423.5 1046.5L425.0 1047.5L426.5 1048.1L428.0 1048.7L429.5 1048.0L431.0 1047.6L432.5 1047.1L434.0 1046.7L435.5 1046.7L437.0 1046.8L438.5 1046.7L440.0 1046.6L441.5 1046.6L443.0 1046.7L444.5 1046.6L446.0 1046.5L447.5 1046.6L449.0 1046.5L450.5 1046.5L452.0 1046.6L453.5 1046.6L455.0 1046.7L456.5 1046.5L458.0 1046.5L459.5 1046.6L461.0 1046.5L462.5 1046.5L464.0 1046.5L465.5 1046.7L467.0 1046.5L468.5 1046.6L470.0 1046.5L471.5 1046.6L473.0 1046.6L474.5 1046.5L476.0 1046.6L477.5 1046.6L479.0 1046.8L480.5 1046.8L482.0 1046.9L483.5 1047.2L485.0 1047.4L486.5 1047.1L488.0 1047.0L489.5 1047.1L491.0 1047.0L492.5 1047.0L494.0 1047.0L495.5 1046.9L497.0 1046.8L498.5 1046.8L500.0 1046.8L501.5 1046.8L503.0 1046.7L504.5 1046.7L506.0 1046.6L507.5 1046.6L509.0 1046.7L510.5 1046.5L512.0 1046.7L513.5 1046.6L515.0 1046.6L516.5 1046.5L518.0 1046.6L519.5 1046.4L521.0 1046.5L522.5 1046.6L524.0 1046.5L525.5 1046.7L527.0 1046.6L528.5 1046.7L530.0 1046.6L531.5 1046.6L533.0 1046.6L534.5 1046.7L536.0 1046.7L537.5 1046.7L539.0 1046.9L540.5 1047.2L542.0 1047.2L543.5 1047.4L545.0 1047.5L546.5 1047.8L548.0 1048.1L549.5 1048.5L551.0 1047.8L552.5 1047.5L554.0 1047.2L555.5 1046.9L557.0 1046.8L558.5 1046.8L560.0 1046.5L561.5 1046.5L563.0 1046.6L564.5 1046.6L566.0 1046.6L567.5 1046.6L569.0 1046.5L570.5 1046.6L572.0 1046.5L573.5 1046.5L575.0 1046.6L576.5 1046.6L578.0 1046.5L579.5 1046.6L581.0 1046.6L582.5 1046.6L584.0 1046.5L585.5 1046.6L587.0 1046.7L588.5 1046.6L590.0 1046.7L591.5 1046.6L593.0 1046.7L594.5 1046.7L596.0 1046.6L597.5 1046.6L599.0 1047.0L600.5 1047.3L602.0 1047.7L603.5 1048.0L605.0 1048.5L606.5 1048.4L608.0 1047.9L609.5 1047.6L611.0 1047.2L612.5 1047.1L614.0 1046.8L615.5 1046.7L617.0 1046.6L618.5 1046.6L620.0 1046.5L621.5 1046.6L623.0 1046.4L624.5 1046.5L626.0 1046.4L627.5 1046.5L629.0 1046.4L630.5 1046.4L632.0 1046.3L633.5 1046.3L635.0 1046.2L636.5 1046.2L638.0 1046.3L639.5 1046.2L641.0 1046.1L642.5 1046.0L644.0 1046.0L645.5 1046.1L647.0 1046.2L648.5 1046.0L650.0 1046.1L651.5 1046.1L653.0 1046.0L654.5 1046.0L656.0 1046.1L657.5 1046.2L659.0 1047.2L660.5 1047.7L662.0 1047.6L663.5 1047.8L665.0 1047.8L666.5 1047.7L668.0 1047.9L669.5 1047.7L671.0 1047.8L672.5 1047.8L674.0 1047.5L675.5 1047.1L677.0 1046.9L678.5 1047.1L680.0 1046.9L681.5 1046.8L683.0 1046.8L684.5 1046.7L686.0 1046.8L687.5 1046.6L689.0 1046.6L690.5 1046.7L692.0 1046.7L693.5 1046.5L695.0 1046.5L696.5 1046.5L698.0 1046.7L699.5 1046.5L701.0 1046.4L702.5 1046.4L704.0 1046.4L705.5 1046.6L707.0 1046.4L708.5 1046.6L710.0 1046.5L711.5 1046.5L713.0 1046.5L714.5 1046.7L716.0 1046.7L717.5 1046.5L719.0 1046.8L720.5 1047.1L722.0 1047.7L723.5 1048.2L725.0 1048.4L726.5 1048.1L728.0 1047.7L729.5 1047.3L731.0 1047.1L732.5 1046.9L734.0 1046.6L735.5 1046.6L737.0 1046.5L738.5 1046.7L740.0 1046.6L741.5 1046.6L743.0 1046.5L744.5 1046.5L746.0 1046.4L747.5 1046.5L749.0 1046.6L750.5 1046.4L752.0 1046.5L753.5 1046.3L755.0 1046.3L756.5 1046.2L758.0 1046.2L759.5 1046.2L761.0 1046.2L762.5 1046.2L764.0 1046.2L765.5 1046.1L767.0 1046.2L768.5 1046.3L770.0 1046.2L771.5 1046.2L773.0 1046.1L774.5 1046.3L776.0 1046.1L777.5 1046.5L779.0 1047.7L780.5 1047.9L782.0 1048.2L783.5 1047.7L785.0 1047.2L786.5 1047.1L788.0 1046.8L789.5 1046.7L791.0 1046.7L792.5 1046.6L794.0 1046.8L795.5 1046.6L797.0 1046.7L798.5 1046.7L800.0 1046.5L801.5 1046.6L803.0 1046.7L804.5 1046.7L806.0 1046.5L807.5 1046.5L809.0 1046.5L810.5 1046.6L812.0 1046.5L813.5 1046.6L815.0 1046.6L816.5 1046.6L818.0 1046.5L819.5 1046.5L821.0 1046.5L822.5 1046.6L824.0 1046.4L824.8 1046.4L824.8 1052.5L824.0 1052.4L822.5 1052.5L821.0 1052.5L819.5 1052.6L818.0 1052.4L816.5 1052.4L815.0 1052.5L813.5 1052.4L812.0 1052.4L810.5 1052.4L809.0 1052.3L807.5 1052.4L806.0 1052.5L804.5 1052.3L803.0 1052.5L801.5 1052.4L800.0 1052.3L798.5 1052.5L797.0 1052.3L795.5 1052.4L794.0 1052.5L792.5 1052.3L791.0 1052.2L789.5 1052.2L788.0 1052.0L786.5 1052.0L785.0 1051.8L783.5 1051.4L782.0 1050.8L780.5 1051.1L779.0 1051.5L777.5 1052.4L776.0 1052.8L774.5 1052.8L773.0 1052.9L771.5 1052.9L770.0 1052.8L768.5 1052.8L767.0 1052.8L765.5 1052.9L764.0 1052.9L762.5 1052.8L761.0 1052.8L759.5 1052.7L758.0 1052.7L756.5 1052.8L755.0 1052.7L753.5 1052.5L752.0 1052.7L750.5 1052.7L749.0 1052.5L747.5 1052.5L746.0 1052.4L744.5 1052.5L743.0 1052.3L741.5 1052.4L740.0 1052.4L738.5 1052.4L737.0 1052.3L735.5 1052.4L734.0 1052.4L732.5 1052.2L731.0 1051.9L729.5 1051.6L728.0 1051.3L726.5 1050.9L725.0 1050.4L723.5 1051.0L722.0 1051.4L720.5 1051.9L719.0 1052.4L717.5 1052.4L716.0 1052.4L714.5 1052.5L713.0 1052.5L711.5 1052.5L710.0 1052.4L708.5 1052.5L707.0 1052.4L705.5 1052.4L704.0 1052.4L702.5 1052.4L701.0 1052.4L699.5 1052.5L698.0 1052.5L696.5 1052.5L695.0 1052.4L693.5 1052.5L692.0 1052.4L690.5 1052.5L689.0 1052.3L687.5 1052.5L686.0 1052.4L684.5 1052.3L683.0 1052.1L681.5 1052.2L680.0 1052.2L678.5 1052.1L677.0 1052.0L675.5 1051.7L674.0 1051.4L672.5 1051.3L671.0 1051.2L669.5 1051.1L668.0 1051.1L666.5 1051.1L665.0 1051.4L663.5 1051.3L662.0 1051.2L660.5 1051.3L659.0 1052.0L657.5 1052.7L656.0 1052.9L654.5 1052.9L653.0 1053.0L651.5 1053.0L650.0 1053.0L648.5 1052.9L647.0 1052.8L645.5 1052.9L644.0 1053.0L642.5 1053.0L641.0 1052.8L639.5 1053.0L638.0 1052.9L636.5 1052.8L635.0 1052.7L633.5 1052.7L632.0 1052.8L630.5 1052.6L629.0 1052.7L627.5 1052.6L626.0 1052.6L624.5 1052.4L623.0 1052.5L621.5 1052.5L620.0 1052.5L618.5 1052.5L617.0 1052.4L615.5 1052.3L614.0 1052.1L612.5 1051.8L611.0 1051.7L609.5 1051.5L608.0 1051.2L606.5 1050.6L605.0 1050.5L603.5 1050.9L602.0 1051.3L600.5 1051.7L599.0 1052.1L597.5 1052.4L596.0 1052.4L594.5 1052.4L593.0 1052.5L591.5 1052.4L590.0 1052.4L588.5 1052.3L587.0 1052.4L585.5 1052.3L584.0 1052.5L582.5 1052.4L581.0 1052.5L579.5 1052.5L578.0 1052.4L576.5 1052.4L575.0 1052.3L573.5 1052.3L572.0 1052.4L570.5 1052.4L569.0 1052.5L567.5 1052.4L566.0 1052.4L564.5 1052.5L563.0 1052.4L561.5 1052.5L560.0 1052.5L558.5 1052.4L557.0 1052.2L555.5 1052.2L554.0 1051.9L552.5 1051.7L551.0 1051.1L549.5 1050.5L548.0 1050.8L546.5 1051.0L545.0 1051.4L543.5 1051.6L542.0 1051.7L540.5 1052.0L539.0 1052.1L537.5 1052.1L536.0 1052.2L534.5 1052.4L533.0 1052.3L531.5 1052.4L530.0 1052.4L528.5 1052.3L527.0 1052.5L525.5 1052.4L524.0 1052.6L522.5 1052.5L521.0 1052.4L519.5 1052.4L518.0 1052.4L516.5 1052.5L515.0 1052.6L513.5 1052.4L512.0 1052.4L510.5 1052.5L509.0 1052.5L507.5 1052.5L506.0 1052.5L504.5 1052.3L503.0 1052.3L501.5 1052.3L500.0 1052.4L498.5 1052.2L497.0 1052.2L495.5 1052.1L494.0 1052.1L492.5 1052.0L491.0 1052.0L489.5 1052.1L488.0 1051.9L486.5 1051.8L485.0 1051.6L483.5 1051.9L482.0 1052.0L480.5 1052.3L479.0 1052.4L477.5 1052.3L476.0 1052.4L474.5 1052.5L473.0 1052.4L471.5 1052.5L470.0 1052.5L468.5 1052.4L467.0 1052.4L465.5 1052.4L464.0 1052.5L462.5 1052.4L461.0 1052.3L459.5 1052.5L458.0 1052.5L456.5 1052.4L455.0 1052.5L453.5 1052.3L452.0 1052.4L450.5 1052.3L449.0 1052.5L447.5 1052.5L446.0 1052.4L444.5 1052.2L443.0 1052.3L441.5 1052.3L440.0 1052.3L438.5 1052.2L437.0 1052.3L435.5 1052.4L434.0 1052.3L432.5 1051.8L431.0 1051.3L429.5 1050.8L428.0 1050.2L426.5 1050.9L425.0 1051.7L423.5 1052.3L422.0 1052.7L420.5 1052.8L419.0 1052.8L417.5 1052.8L416.0 1052.8L414.5 1052.8L413.0 1052.9L411.5 1053.1L410.0 1053.0L408.5 1053.1L407.0 1053.1L405.5 1053.2L404.0 1053.1L402.5 1053.2L401.0 1053.1L399.5 1053.2L398.0 1053.2L396.5 1053.2L395.0 1053.3L393.5 1053.2L392.0 1053.2L390.5 1053.0L389.0 1053.0L387.5 1052.9L386.0 1052.9L384.5 1052.6L383.0 1052.2L381.5 1051.9L380.0 1052.0L378.5 1051.8L377.0 1051.9L375.5 1051.9L374.0 1051.9L372.5 1051.9L371.0 1052.0L369.5 1052.0L368.0 1052.1L366.5 1052.2L365.0 1052.4L363.5 1052.4L362.0 1052.3L360.5 1052.5L359.0 1052.6L357.5 1052.7L356.0 1053.0L354.5 1052.8L353.0 1052.7L351.5 1052.7L350.0 1052.6L348.5 1052.5L347.0 1052.5L345.5 1052.5L344.0 1052.5L342.5 1052.5L341.0 1052.3L339.5 1052.4L338.0 1052.5L336.5 1052.4L335.0 1052.5L333.5 1052.4L332.0 1052.3L330.5 1052.3L329.0 1052.3L327.5 1052.4L326.0 1052.3L324.5 1052.4L323.0 1052.3L321.5 1052.5L320.0 1052.2L318.5 1052.2L317.0 1052.3L315.5 1052.3L314.0 1052.2L312.5 1052.0L311.0 1052.0L309.5 1051.8L308.0 1051.8L306.5 1051.6L305.0 1051.7L303.5 1052.6L302.0 1053.0L300.5 1052.8L299.0 1052.8L297.5 1052.9L296.0 1052.9L294.5 1053.0L293.0 1052.9L291.5 1052.8L290.0 1052.9L288.5 1053.0L287.0 1052.8L285.5 1052.8L284.0 1053.0L282.5 1052.9L281.0 1052.9L279.5 1053.0L278.0 1052.9L276.5 1052.8L275.0 1052.8L273.5 1052.9L272.0 1052.9L270.5 1052.8L269.0 1052.8L267.5 1052.7L266.0 1052.7L264.5 1052.8L263.0 1052.6L261.5 1052.5L260.0 1052.5L258.5 1052.4L257.0 1052.4L255.5 1052.3L254.0 1052.1L252.5 1051.8L251.0 1051.5L249.5 1051.7L248.0 1051.7L246.5 1052.0L245.0 1051.9L243.5 1052.0L242.0 1052.1L240.5 1052.2L239.0 1052.1L237.5 1052.3L236.0 1052.1L234.5 1052.3L233.0 1052.2L231.5 1052.2L230.0 1052.2L228.5 1052.3L227.0 1052.3L225.5 1052.3L224.0 1052.5L222.5 1052.3L221.0 1052.3L219.5 1052.3L218.0 1052.3L216.5 1052.3L215.0 1052.4L213.5 1052.4L212.0 1052.4L210.5 1052.5L209.0 1052.3L207.5 1052.2L206.0 1052.4L204.5 1052.3L203.0 1052.4L201.5 1052.2L200.0 1052.2L198.5 1052.1L197.0 1052.0L195.5 1051.8L194.0 1051.6L192.5 1051.3L191.0 1051.0L189.5 1050.5L188.0 1050.2L186.5 1049.9L185.0 1049.9Z" fill="#1890ff"/>
<path d="M211.500 918H235.500V943L224.600 955.500H222.200L211.500 943Z" fill="#ff5c5c"/>
<rect x="221.800" y="950" width="3.300" height="109" fill="#ff5c5c"/>
<path d="M216.700 923.200H230.200M216.700 927.600H230.200M216.700 932H230.200" stroke="#d93c3c" stroke-width="2"/>
<rect x="185.700" y="1060.300" width="112.700" height="17" rx="8" fill="#b5b5b5"/>
<rect x="1616.600" y="959.200" width="17" height="56.200" rx="8" fill="#b5b5b5"/>
<rect x="184.800" y="918" width="1.200" height="141" fill="#1c1e20"/>
<circle cx="26.400" cy="976.0" r="8.200" fill="rgba(60,60,60,0.080)"/><circle cx="26.400" cy="976.0" r="4.700" fill="rgba(60,60,60,0.040)" stroke="rgba(40,40,40,0.290)" stroke-width="2.900"/>
<rect x="40.300" y="966.5" width="17.200" height="17.200" rx="1.500" fill="rgba(60,60,60,0.070)"/>
<path d="M44.800 974.0V970.0A1.500 1.500 0 0 1 46.300 968.5H51.500A1.500 1.500 0 0 1 53 970.0V974.0" fill="none" stroke="rgba(255,255,255,0.180)" stroke-width="2"/>
<rect x="42.300" y="974.0" width="13" height="8.300" fill="rgba(30,30,30,0.380)"/>
<circle cx="26.400" cy="1012.0" r="8.200" fill="rgba(60,60,60,0.080)"/><circle cx="26.400" cy="1012.0" r="4.700" fill="rgba(60,60,60,0.040)" stroke="rgba(40,40,40,0.290)" stroke-width="2.900"/>
<rect x="40.300" y="1002.5" width="17.200" height="17.200" rx="1.500" fill="rgba(60,60,60,0.070)"/>
<path d="M44.800 1010.0V1006.0A1.500 1.500 0 0 1 46.300 1004.5H51.500A1.500 1.500 0 0 1 53 1006.0V1010.0" fill="none" stroke="rgba(255,255,255,0.180)" stroke-width="2"/>
<rect x="42.300" y="1010.0" width="13" height="8.300" fill="rgba(30,30,30,0.380)"/>
<circle cx="26.400" cy="1048.0" r="8.200" fill="rgba(60,60,60,0.080)"/><circle cx="26.400" cy="1048.0" r="4.700" fill="rgba(60,60,60,0.040)" stroke="rgba(40,40,40,0.290)" stroke-width="2.900"/>
<rect x="40.300" y="1038.5" width="17.200" height="17.200" rx="1.500" fill="rgba(60,60,60,0.070)"/>
<path d="M44.800 1046.0V1042.0A1.500 1.500 0 0 1 46.300 1040.5H51.500A1.500 1.500 0 0 1 53 1042.0V1046.0" fill="none" stroke="rgba(255,255,255,0.180)" stroke-width="2"/>
<rect x="42.300" y="1046.0" width="13" height="8.300" fill="rgba(30,30,30,0.380)"/>
</svg>
<svg class="abs" style="left:70px;top:38px" width="110" height="36" viewBox="74 922 110 36">
  <g fill="#4b4f52"><path d="M88.100 931.600V929.800A1.500 1.500 0 0 1 89.600 928.300H98.500A1.500 1.500 0 0 1 100 929.800V931.600H98.300V930H89.800V931.600Z"/><rect x="81.900" y="931.400" width="24.100" height="2.600" rx="0.600"/><path d="M83.800 936.400H104.200L101.800 951.300A1.700 1.700 0 0 1 100.100 952.700H87.900A1.700 1.700 0 0 1 86.200 951.300Z"/></g>
  <path d="M90.300 938.500L91.200 950.500M97.700 938.500L96.800 950.500" stroke="#2a2e31" stroke-width="1.700"/>
  <rect x="118.700" y="929.200" width="18.300" height="22.300" rx="1.600" fill="#3c4043" stroke="#969696" stroke-width="2.400"/><circle cx="128" cy="941.300" r="3.400" fill="none" stroke="#969696" stroke-width="2"/>
  <rect x="153.450" y="932.350" width="16" height="16" rx="2.200" transform="rotate(45 161.450 940.350)" fill="#3c4043" stroke="#969696" stroke-width="2.400"/>
</svg>
<svg class="abs" style="left:4px;top:176px" width="80" height="18" viewBox="8 1060 80 18">
  <rect x="10.300" y="1063.500" width="18.200" height="10.800" fill="#3c3c3c" stroke="#7c7c7c" stroke-width="1.300"/><rect x="30.300" y="1063.500" width="8.400" height="10.800" fill="#141414" stroke="#7c7c7c" stroke-width="1.300"/>
  <path d="M13.300 1069.300L16.500 1070.900L13.300 1072.500ZM33.300 1069.300L36.500 1070.900L33.300 1072.500Z" fill="#b0b0b0"/>
  <path d="M54.800 1073.700L58.300 1068L60 1070.500L63.400 1065.500L65.900 1069L69.300 1063.400L75 1073.700Z" fill="#333" stroke="#909090" stroke-width="1.400" stroke-linejoin="round"/>
</svg>
<div class="t" id="t_project" style="left:5.2px;top:9.3px;font-size:15px;color:#c6c6c6;letter-spacing:0.43px">Project</div>
<div class="t" id="t_ltext" style="left:64.6px;top:83.0px;font-size:18px;color:#333;letter-spacing:0.40px">text</div>
<div class="t" id="t_lani" style="left:63.6px;top:119.0px;font-size:18px;color:#38204e;letter-spacing:0.10px">ani</div>
<div class="t" id="t_lmusic" style="left:63.6px;top:155.0px;font-size:18px;color:#333;letter-spacing:0.05px">music</div>
<div class="t num" style="left:189.1px">1</div>
<div class="t num" style="left:288.1px">5</div>
<div class="t num" style="left:406.4px">10</div>
<div class="t num" style="left:530.1px">15</div>
<div class="t num" style="left:653.8px">20</div>
<div class="t num" style="left:777.5px">25</div>
<div class="t num" style="left:901.2px">30</div>
<div class="t num" style="left:1024.9px">35</div>
<div class="t num" style="left:1148.6px">40</div>
<div class="t num" style="left:1272.3px">45</div>
<div class="t num" style="left:1396.0px">50</div>
<div class="t num" style="left:1519.7px">55</div>
</div>
</body>
</html>
